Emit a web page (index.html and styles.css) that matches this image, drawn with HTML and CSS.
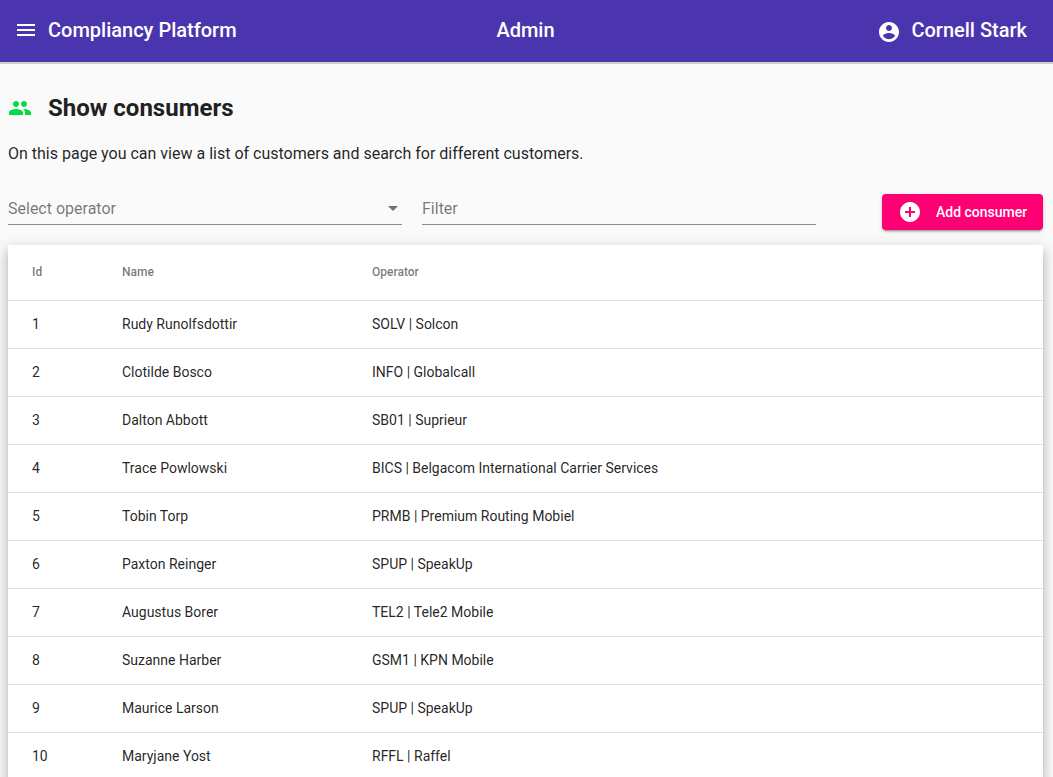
FILE: index.html
```html
<!DOCTYPE html>
<html lang="en">
<head>
  <meta charset="UTF-8">
  <meta name="viewport" content="width=device-width, initial-scale=1.0">
  <title>Compliancy Platform</title>
  <link rel="stylesheet" href="styles.css">
</head>
<body>
  <header class="toolbar">
    <div class="toolbar-left">
      <svg class="icon menu-icon" viewBox="0 0 24 24"><path d="M3 18h18v-2H3v2zm0-5h18v-2H3v2zm0-7v2h18V6H3z"/></svg>
      <span>Compliancy Platform</span>
    </div>
    <div class="toolbar-center">Admin</div>
    <div class="toolbar-right">
      <svg class="icon user-icon" viewBox="0 0 24 24"><path d="M12 2C6.48 2 2 6.48 2 12s4.48 10 10 10 10-4.48 10-10S17.52 2 12 2zm0 3c1.66 0 3 1.34 3 3s-1.34 3-3 3-3-1.34-3-3 1.34-3 3-3zm0 14.2c-2.5 0-4.71-1.28-6-3.22.03-1.99 4-3.08 6-3.08 1.99 0 5.97 1.09 6 3.08-1.29 1.94-3.5 3.22-6 3.22z"/></svg>
      <span>Cornell Stark</span>
    </div>
  </header>

  <main class="content">
    <div class="page-title">
      <svg class="icon title-icon" viewBox="0 0 24 24"><path d="M16 11c1.66 0 2.99-1.34 2.99-3S17.66 5 16 5c-1.66 0-3 1.34-3 3s1.34 3 3 3zm-8 0c1.66 0 2.99-1.34 2.99-3S9.66 5 8 5C6.34 5 5 6.34 5 8s1.34 3 3 3zm0 2c-2.33 0-7 1.17-7 3.5V19h14v-2.5c0-2.33-4.67-3.5-7-3.5zm8 0c-.29 0-.62.02-.97.05 1.16.84 1.97 1.97 1.97 3.45V19h6v-2.5c0-2.33-4.67-3.5-7-3.5z"/></svg>
      <h1>Show consumers</h1>
    </div>
    <p class="intro">On this page you can view a list of customers and search for different customers.</p>

    <div class="controls">
      <div class="field">
        <span>Select operator</span>
        <span class="arrow"></span>
      </div>
      <div class="field">
        <span>Filter</span>
      </div>
      <button class="add-button">
        <svg class="icon add-icon" viewBox="0 0 24 24"><path d="M12 2C6.48 2 2 6.48 2 12s4.48 10 10 10 10-4.48 10-10S17.52 2 12 2zm5 11h-4v4h-2v-4H7v-2h4V7h2v4h4v2z"/></svg>
        <span>Add consumer</span>
      </button>
    </div>

    <table class="consumers">
      <thead>
        <tr><th class="col-id">Id</th><th class="col-name">Name</th><th>Operator</th></tr>
      </thead>
      <tbody>
        <tr><td>1</td><td>Rudy Runolfsdottir</td><td>SOLV | Solcon</td></tr>
        <tr><td>2</td><td>Clotilde Bosco</td><td>INFO | Globalcall</td></tr>
        <tr><td>3</td><td>Dalton Abbott</td><td>SB01 | Suprieur</td></tr>
        <tr><td>4</td><td>Trace Powlowski</td><td>BICS | Belgacom International Carrier Services</td></tr>
        <tr><td>5</td><td>Tobin Torp</td><td>PRMB | Premium Routing Mobiel</td></tr>
        <tr><td>6</td><td>Paxton Reinger</td><td>SPUP | SpeakUp</td></tr>
        <tr><td>7</td><td>Augustus Borer</td><td>TEL2 | Tele2 Mobile</td></tr>
        <tr><td>8</td><td>Suzanne Harber</td><td>GSM1 | KPN Mobile</td></tr>
        <tr><td>9</td><td>Maurice Larson</td><td>SPUP | SpeakUp</td></tr>
        <tr><td>10</td><td>Maryjane Yost</td><td>RFFL | Raffel</td></tr>
      </tbody>
    </table>
  </main>
</body>
</html>
```

FILE: styles.css
```css
html, body {
  height: 777px;
  overflow: hidden;
}
body {
  margin: 0;
  background: #fafafa;
  color: rgba(0, 0, 0, 0.87);
  font-family: Roboto, sans-serif;
  font-size: 14px;
}
.icon {
  display: block;
  fill: currentColor;
  flex: none;
}
.toolbar {
  display: grid;
  grid-template-columns: 1fr auto 1fr;
  align-items: center;
  box-sizing: border-box;
  height: 64px;
  padding: 0 26px 2px 24px;
  background: #4a35ae;
  border-bottom: 2px solid #cfcfcf;
  color: #fff;
  font-size: 20px;
  font-weight: 500;
}
.toolbar-left, .toolbar-right {
  display: flex;
  align-items: center;
}
.toolbar-right {
  justify-content: flex-end;
}
.menu-icon {
  width: 24px;
  height: 24px;
  margin: 0 10px 0 -10px;
}
.user-icon {
  width: 24px;
  height: 24px;
  margin: 4px 10px 0 0;
}
.content {
  padding: 0 10px 0 8px;
}
.page-title {
  display: flex;
  align-items: center;
  height: 32px;
  margin-top: 28px;
}
.page-title h1 {
  margin: 0;
  font-size: 24px;
  font-weight: 700;
  color: #212121;
}
.title-icon {
  width: 24px;
  height: 24px;
  margin-right: 16px;
  color: #00dd44;
}
.intro {
  margin: 18px 0 0;
  font-size: 16px;
  line-height: 24px;
}
.controls {
  display: flex;
  align-items: flex-start;
  margin-top: 28px;
}
.field {
  display: flex;
  align-items: center;
  justify-content: space-between;
  box-sizing: border-box;
  width: 394px;
  height: 31px;
  padding-bottom: 1px;
  margin-right: 20px;
  border-bottom: 1px solid #8c8c8c;
  color: rgba(0, 0, 0, 0.54);
  font-size: 16px;
}
.arrow {
  width: 0;
  height: 0;
  margin-right: 4px;
  border-left: 5px solid transparent;
  border-right: 5px solid transparent;
  border-top: 5px solid rgba(0, 0, 0, 0.54);
}
.add-button {
  display: flex;
  align-items: center;
  box-sizing: border-box;
  width: 161px;
  height: 36px;
  margin-left: auto;
  padding: 0 16px;
  border: 0;
  border-radius: 4px;
  background: #ff0074;
  color: #fff;
  font-family: inherit;
  font-size: 14px;
  font-weight: 500;
  white-space: nowrap;
  box-shadow: 0 3px 1px -2px rgba(0, 0, 0, 0.2), 0 2px 2px 0 rgba(0, 0, 0, 0.14), 0 1px 5px 0 rgba(0, 0, 0, 0.12);
}
.add-icon {
  width: 24px;
  height: 24px;
  margin-right: 14px;
}
.consumers {
  width: 100%;
  margin-top: 15px;
  border-collapse: collapse;
  table-layout: fixed;
  background: #fff;
  box-shadow: 0 5px 5px -3px rgba(0, 0, 0, 0.2), 0 8px 10px 1px rgba(0, 0, 0, 0.14), 0 3px 14px 2px rgba(0, 0, 0, 0.12);
}
.consumers th {
  height: 53px;
  padding: 0 0 2px;
  text-align: left;
  font-size: 12px;
  font-weight: 500;
  color: rgba(0, 0, 0, 0.54);
  border-bottom: 1px solid #e0e0e0;
}
.consumers td {
  height: 45px;
  padding: 0 0 2px;
  border-bottom: 1px solid #e0e0e0;
}
.consumers th:first-child, .consumers td:first-child {
  padding-left: 24px;
}
.col-id {
  width: 90px;
}
.col-name {
  width: 250px;
}
```
